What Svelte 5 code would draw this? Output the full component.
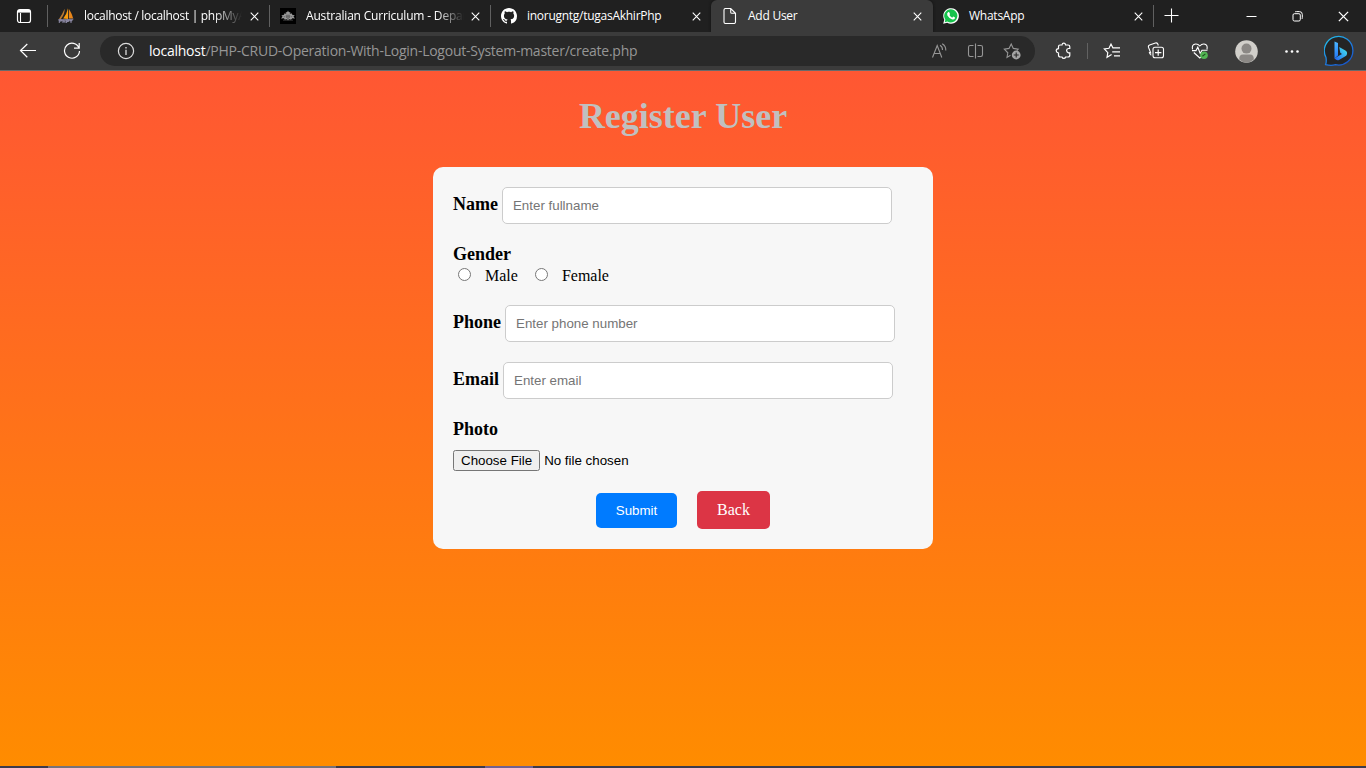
<script>
  const tabs = [
    { title: 'localhost / localhost | phpMyA', icon: 'sail', spacing: -0.3 },
    { title: 'Australian Curriculum - Depar', icon: 'crest', spacing: -0.18 },
    { title: 'inorugntg/tugasAkhirPhp', icon: 'github', spacing: -0.27 },
    { title: 'Add User', icon: 'page', active: true, spacing: -0.25 },
    { title: 'WhatsApp', icon: 'whatsapp', spacing: -0.25 }
  ];
</script>

{#snippet cross(size)}
  <svg width={size} height={size} viewBox="0 0 10 10" fill="none" stroke="#fff" stroke-width="1.2"><path d="M.8.8 9.2 9.2M9.2.8.8 9.2" /></svg>
{/snippet}

{#snippet tabIcon(name)}
  <svg class="favicon" width="16" height="16" viewBox="0 0 16 16" fill="none">
    {#if name === 'sail'}
      <path d="M6.6.8Q7 6 3 11H1Q4 7 6.6.8Z" fill="#b97932" />
      <path d="M10 .2Q8.8 6 5.2 10.6L10 11Z" fill="#f89c0e" />
      <path d="M10.8.8Q14.2 6 15.2 10.6H10.8Z" fill="#e8861a" />
      <path d="M0 11.2 15.8 10.7 14 13.2H1Z" fill="#777489" />
      <path d="M1.3 15V11.7H3.4V13H1.3M5 11.7V15M5 13.2H7V15M8.6 15V12H10.6V13.5H8.6M12 11.7 13 13.5 14 11.7M13 13.5V15" stroke="#8e8ba7" />
    {:else if name === 'crest'}
      <path d="M0 0H16V16H0Z" fill="#000" />
      <path d="M8 2.4 8.7 4 10.5 4.6 9.6 6 11.5 5.2 12.3 6.8 14.8 7.6 13.4 8.6 15 10.4 12.3 10.3 11 11.8 9.2 11.3 8 12.6 6.8 11.3 4.7 11.8 4 10.3 1 10.4 2.6 8.6 1.4 7.4 4 6.8 4.6 5.2 6.4 6 5.6 4.6 7.3 4Z" fill="#999" />
      <path d="M6.2 7.2H9.8V9.3L8 10.6 6.2 9.3ZM3.5 8.2 5 9M12.4 8.2 11 9M8 7.2V10.4M6.2 8.7H9.8" stroke="#4c4c4c" stroke-width=".6" />
      <path d="M3 12.2H13" stroke="#444" stroke-width=".8" />
    {:else if name === 'github'}
      <path fill="#fff" d="M8 0C3.58 0 0 3.58 0 8c0 3.54 2.29 6.53 5.47 7.59.4.07.55-.17.55-.38v-1.49c-2.01.37-2.53-.49-2.69-.94-.09-.23-.48-.94-.82-1.13-.28-.15-.68-.52-.01-.53.63-.01 1.08.58 1.23.82.72 1.21 1.87.87 2.33.66.07-.52.28-.87.51-1.07-1.78-.2-3.64-.89-3.64-3.95 0-.87.31-1.59.82-2.15-.08-.2-.36-1.02.08-2.12 0 0 .67-.21 2.2.82.64-.18 1.32-.27 2-.27s1.36.09 2 .27c1.53-1.04 2.2-.82 2.2-.82.44 1.1.16 1.92.08 2.12.51.56.82 1.27.82 2.15 0 3.07-1.87 3.75-3.65 3.95.29.25.54.73.54 1.48v2.2c0 .21.15.46.55.38A8.01 8.01 0 0 0 16 8c0-4.42-3.58-8-8-8Z" />
    {:else if name === 'page'}
      <path d="M3 .5H8.7L13.5 5.3V14Q13.5 15.5 12 15.5H3.5Q2 15.5 2 14V2Q2 .5 3.5.5M8.7.7V4.2Q8.7 5.3 9.8 5.3H13.3" stroke="#fff" stroke-width="1.1" />
    {:else}
      <path d="M.2 15.8 1.3 11.8A7.8 7.8 0 1 1 4.2 14.7Z" fill="#fff" />
      <path d="M1.7 14.3 2.4 11.7A6.6 6.6 0 1 1 4.5 13.6Z" fill="#16c34c" />
      <path d="M5.3 4.1Q6 3.8 6.4 4.5L7 5.9Q7.1 6.3 6.4 7.1 7.3 8.9 9.2 9.7L10 8.8Q10.3 8.5 10.7 8.7L12 9.4Q12.2 9.8 11.8 10.6 10.8 12 8.8 11.2 5.9 10.2 4.4 7.5 3.4 5.5 5.3 4.1Z" fill="#fff" />
    {/if}
  </svg>
{/snippet}

<div class="screen">
  <header class="tabs">
    <div class="workspace">
      <svg width="16" height="16" viewBox="0 0 16 16" fill="none" stroke="#fff"><rect x="1.5" y="1.5" width="13" height="13" rx="2.3" stroke-width="1.2" /><path d="M4.5 5V14.3" stroke-width="1.1" /><path d="M2 2H14V4.6H2Z" fill="#fff" stroke="none" /></svg>
    </div>
    {#each tabs as tab}
      <div class="tab {tab.icon}" class:active={tab.active}>
        {@render tabIcon(tab.icon)}
        <span class="tab-title" style="letter-spacing: {tab.spacing}px">{tab.title}</span>
        <span class="close">{@render cross(9)}</span>
      </div>
    {/each}
    <div class="newtab"><svg width="15" height="15" viewBox="0 0 15 15" stroke="#fff" stroke-width="1.1"><path d="M7.5.5V14.5M.5 7.5H14.5" /></svg></div>
    <div class="window-controls">
      <svg width="11" height="11" viewBox="0 0 11 11" stroke="#fff"><path d="M.5 5.5H10.5" /></svg>
      <svg width="11" height="11" viewBox="0 0 11 11" fill="none" stroke="#fff"><rect x="1" y="2.7" width="7.3" height="7.3" rx="1.4" /><path d="M3 1Q3.2.6 4.5.6H7.5Q10.3.6 10.3 3.5V6.5Q10.3 7.7 9.8 8" /></svg>
      {@render cross(11)}
    </div>
  </header>

  <nav class="toolbar">
    <svg class="back-arrow" width="18" height="16" viewBox="0 0 18 16" fill="none" stroke="#fff" stroke-width="1.2"><path d="M17 7.5H1.5M8.3 1 1.5 7.5 8.3 14.2" /></svg>
    <svg class="reload" width="18" height="18" viewBox="0 0 18 18" fill="none" stroke="#fff" stroke-width="1.2"><path d="M16 6A7.5 7.5 0 1 0 16.5 9M16.2 1V6.2H11" /></svg>
    <div class="address">
      <svg class="info" width="18" height="18" viewBox="0 0 18 18" fill="none" stroke="#ddd"><circle cx="9" cy="9" r="7.6" stroke-width="1.2" /><path d="M9 7.8V13M9 5V6.4" stroke-width="1.3" /></svg>
      <span class="url"><b>localhost</b><span>/PHP-CRUD-Operation-With-Login-Logout-System-master/create.php</span></span>
      <div class="address-icons">
        <svg width="18" height="16" viewBox="0 0 18 16" fill="none" stroke="#969696" stroke-width="1.1"><path d="M1.5 14.5 6.2 2.5 10.8 14.5M3.2 10.5H9.2M9 2.2Q11.6 3.5 11.5 7M11.2.8Q15 3 14.8 7.6" /></svg>
        <svg width="18" height="16" viewBox="0 0 18 16" fill="none" stroke="#969696" stroke-width="1.1"><path d="M6.5 2.5H3.2Q1.5 2.5 1.5 4.2V11.8Q1.5 13.5 3.2 13.5H6.5M10.5 2.5H13.8Q15.5 2.5 15.5 4.2V11.8Q15.5 13.5 13.8 13.5H10.5M8.5 .5V15.5" /></svg>
        <svg width="18" height="18" viewBox="0 0 18 18" fill="none" stroke="#969696" stroke-width="1.1"><path d="M7.5 13.3 4 15.4 4.8 10.8 1.3 7.2 6 6.4 8.2 2 10.3 6.4 15.2 7.2 13.8 8.7" /><circle cx="13.2" cy="13" r="4.4" fill="#a4a4a4" stroke="none" /><path d="M13.2 10.5V15.5M10.7 13H15.7" stroke="#292929" /></svg>
      </div>
    </div>
    <div class="tools">
      <svg width="18" height="18" viewBox="0 0 18 18" fill="none" stroke="#fff" stroke-width="1.2"><path d="M4.6 3H7Q7.2 1.2 8.8 1.2T10.6 3H13Q14.8 3 14.8 4.8V6.5H13.4Q11.6 6.8 11.6 8.6T13.4 10.8H14.8V13Q14.8 15 13 15H10.6Q10.2 16.4 8.8 16.4T7 15H5.4Q3.5 15 3.5 13V11Q1.2 10.6 1.2 8.8T3.5 6.7V4.5Q3.5 3 5 3" /></svg>
      <i></i>
      <svg width="18" height="18" viewBox="0 0 18 18" fill="none" stroke="#fff" stroke-width="1.15"><path d="M10.8 5.8H17M11 9.8H17M11 13.8H17M8.6 12.5 4 15.3 4.8 10.6 1.3 7 6 6.3 8 2 9.9 5.8H11M11 9.8H9.2" /></svg>
      <svg width="18" height="18" viewBox="0 0 18 18" fill="none" stroke="#fff" stroke-width="1.1"><path d="M4 11.5 1.5 5.4Q1 3.7 2.6 3L8.4 1Q10 .6 10.8 2L11.3 3.5M4.3 13.2Q2.7 12.5 2.2 10" /><rect x="6" y="5.3" width="10.5" height="10.5" rx="2" /><path d="M11.2 7.4V13.8M8 10.6H14.4" stroke-width="1.2" /></svg>
      <svg width="18" height="18" viewBox="0 0 18 18" fill="none" stroke="#fff" stroke-width="1.1"><path d="M1.5 7.3Q.5 2.5 4.6 2 7 1.8 8.8 4 10.7 1.8 13 2 17 2.5 16 7.3M1 8.6H5L6.8 5.2 9.2 11.5 11 8.2H16.5M2.8 10.5 8.8 16 10 15" /><circle cx="13" cy="13.2" r="3.8" fill="#52b653" stroke="none" /><path d="m11.4 14.3 3-2.4" stroke="#214d22" /></svg>
      <svg class="avatar" width="23" height="23" viewBox="0 0 23 23"><circle cx="11.5" cy="11.5" r="11.3" fill="#d1cfca" /><circle cx="11.5" cy="8.6" r="5" fill="#8b8885" /><path d="M4.2 19.6Q4 14.5 8 14.5H15Q19 14.5 18.8 19.6Q15.5 22.8 11.5 22.8T4.2 19.6Z" fill="#8b8885" /></svg>
      <svg width="16" height="5" viewBox="0 0 16 5" fill="#fff"><circle cx="2.5" cy="2.5" r="1.3" /><circle cx="8" cy="2.5" r="1.3" /><circle cx="13.5" cy="2.5" r="1.3" /></svg>
      <svg class="bing" width="32" height="32" viewBox="0 0 32 32" fill="none">
        <defs><linearGradient id="ring" x1="5" y1="3" x2="25" y2="30" gradientUnits="userSpaceOnUse"><stop stop-color="#22b8ea" /><stop offset=".55" stop-color="#1d7ae0" /><stop offset="1" stop-color="#1750c8" /></linearGradient><linearGradient id="glyph" x1="10" y1="8" x2="20" y2="26" gradientUnits="userSpaceOnUse"><stop stop-color="#4bb5ff" /><stop offset="1" stop-color="#145ff5" /></linearGradient><linearGradient id="bowl" x1="23" y1="15" x2="12" y2="25" gradientUnits="userSpaceOnUse"><stop stop-color="#42dded" /><stop offset="1" stop-color="#2469f2" /></linearGradient></defs>
        <path d="M1.6 29.6Q2.7 27 2 22.5A14.3 14.3 0 1 1 11.5 29.7Q7 31 1.6 29.6Z" fill="#242424" stroke="url(#ring)" stroke-width="1.3" />
        <path d="M10.5 6.5 14 8V20.5L10.5 23.4Z" fill="url(#glyph)" /><path d="M15.2 12 21.4 15.4Q24.4 17.3 22.2 20.7L15 25Q12.5 26 10.5 23.3L18 19 16.3 17.8Z" fill="url(#bowl)" />
      </svg>
    </div>
  </nav>

  <main>
    <h1>Register User</h1>
    <form>
      <div class="field"><label for="name">Name</label><input id="name" type="text" placeholder="Enter fullname" /></div>
      <div class="gender">
        <strong>Gender</strong>
        <div class="options">
          <label><input type="radio" name="gender" />Male</label>
          <label><input type="radio" name="gender" />Female</label>
        </div>
      </div>
      <div class="field"><label for="phone">Phone</label><input id="phone" type="text" placeholder="Enter phone number" /></div>
      <div class="field"><label for="email">Email</label><input id="email" type="email" placeholder="Enter email" /></div>
      <div class="photo"><label for="photo">Photo</label><input id="photo" type="file" /></div>
      <div class="actions"><button type="button">Submit</button><a href="#back">Back</a></div>
    </form>
  </main>
  <footer><i class="running"></i><i class="pinned"></i></footer>
</div>

<style>
  :global(body) { margin: 0; overflow: hidden; }
  * { box-sizing: border-box; }
  svg { display: block; flex: none; }
  .screen { width: 1366px; height: 768px; display: flex; flex-direction: column; overflow: hidden; }
  .tabs { height: 32px; flex: none; display: flex; background: #202020; color: #fff; font: 12px "Open Sans", "Noto Sans", sans-serif; }
  .workspace { width: 48px; padding: 8px 0 0 16px; border-right: 1px solid #5e5e5e; border-image: linear-gradient(transparent 6px, #606060 6px 26px, transparent 26px) 1; }
  .tab { width: 221px; height: 32px; display: flex; align-items: center; padding: 0 10px; border-right: 1px solid; border-image: linear-gradient(transparent 6px, #606060 6px 26px, transparent 26px) 1; }
  .tab.sail { width: 222px; }
  .tab.github { border: 0; width: 220px; }
  .tab.active { width: 222px; background: #3b3b3b; border: 0; border-radius: 6px 6px 0 0; box-shadow: 0 0 3px #111; padding: 0 11px; }
  .tab.whatsapp { width: 221px; }
  .tab-title { flex: none; width: 158px; margin-left: 10px; white-space: nowrap; line-height: 18px; }
  .sail .tab-title, .crest .tab-title { mask-image: linear-gradient(90deg, #000 130px, transparent 158px); }
  .close { margin-left: auto; }
  .newtab { width: 35px; padding: 8px 0 0 10px; }
  .window-controls { flex: 1; display: flex; justify-content: flex-end; align-items: center; gap: 35px; padding-right: 17px; }
  .toolbar { height: 39px; flex: none; display: flex; align-items: center; background: #3b3b3b; border-bottom: 1px solid #6a6a6a; }
  .back-arrow { margin-left: 19px; }
  .reload { margin-left: 26px; }
  .address { width: 935px; height: 30px; margin-left: 19px; border-radius: 15px; background: #292929; display: flex; align-items: center; padding-left: 17px; }
  .url { margin-left: 14px; margin-top: -1px; font: 14px "Open Sans", "Noto Sans", sans-serif; color: #969696; white-space: nowrap; letter-spacing: -.25px; }
  .url b { font-weight: 400; color: #fff; }
  .address-icons { margin-left: auto; margin-right: 14px; display: flex; gap: 18px; align-items: center; }
  .tools { flex: 1; display: flex; align-items: center; padding-left: 20px; }
  .tools i { width: 1px; height: 16px; margin: 0 15px 0 14px; background: #626262; }
  .tools svg + svg { margin-left: 26px; }
  .tools svg + .avatar { margin-left: 26px; }
  .tools .avatar + svg { margin-left: 26px; }
  .tools svg + .bing { margin-left: 24px; }
  main { flex: 1; min-height: 0; background: linear-gradient(#ff5733, #ff8c00); font: 16px/20px "Liberation Serif", serif; color: #000; }
  h1 { margin: 24px 0 30px; text-align: center; color: #c0c0c0; font-size: 36px; line-height: 42px; }
  form { width: 500px; height: 382px; margin: 0 auto; padding: 20px; display: flex; flex-direction: column; gap: 20px; border-radius: 10px; background: #f7f7f7; }
  .field { height: 37px; display: flex; align-items: center; gap: 4px; }
  .field label, .gender strong, .photo label { font-size: 18px; font-weight: bold; line-height: 21px; }
  .field label { padding-bottom: 3px; }
  .field input { width: 390px; height: 37px; padding: 10px; border: 1px solid #ccc; border-radius: 5px; font: 13.333px "Liberation Sans", sans-serif; }
  .gender { height: 41px; }
  .gender strong, .photo label { display: block; }
  .options { display: flex; }
  .options label { display: flex; height: 20px; line-height: 22px; margin-right: 12px; }
  .options input { width: 13px; height: 13px; margin: 3px 14px 0 5px; }
  .photo { height: 52px; }
  .photo input { display: block; margin-top: 10px; height: 21px; font: 13.333px "Liberation Sans", sans-serif; }
  .actions { height: 38px; display: flex; justify-content: center; align-items: center; gap: 20px; }
  button { width: 81px; height: 35px; margin-top: 1px; border: 0; border-radius: 5px; background: #007bff; color: #fff; font: 13.333px "Liberation Sans", sans-serif; padding: 0; }
  a { width: 73px; height: 38px; text-align: center; line-height: 38px; color: #fff; background: #dc3545; border-radius: 5px; text-decoration: none; }
  footer { height: 2px; flex: none; display: flex; background: #3e3a4b; }
  .running { width: 288px; margin-left: 48px; background: #77727a; }
  .pinned { width: 48px; margin-left: 149px; background: #73618c; }
</style>
